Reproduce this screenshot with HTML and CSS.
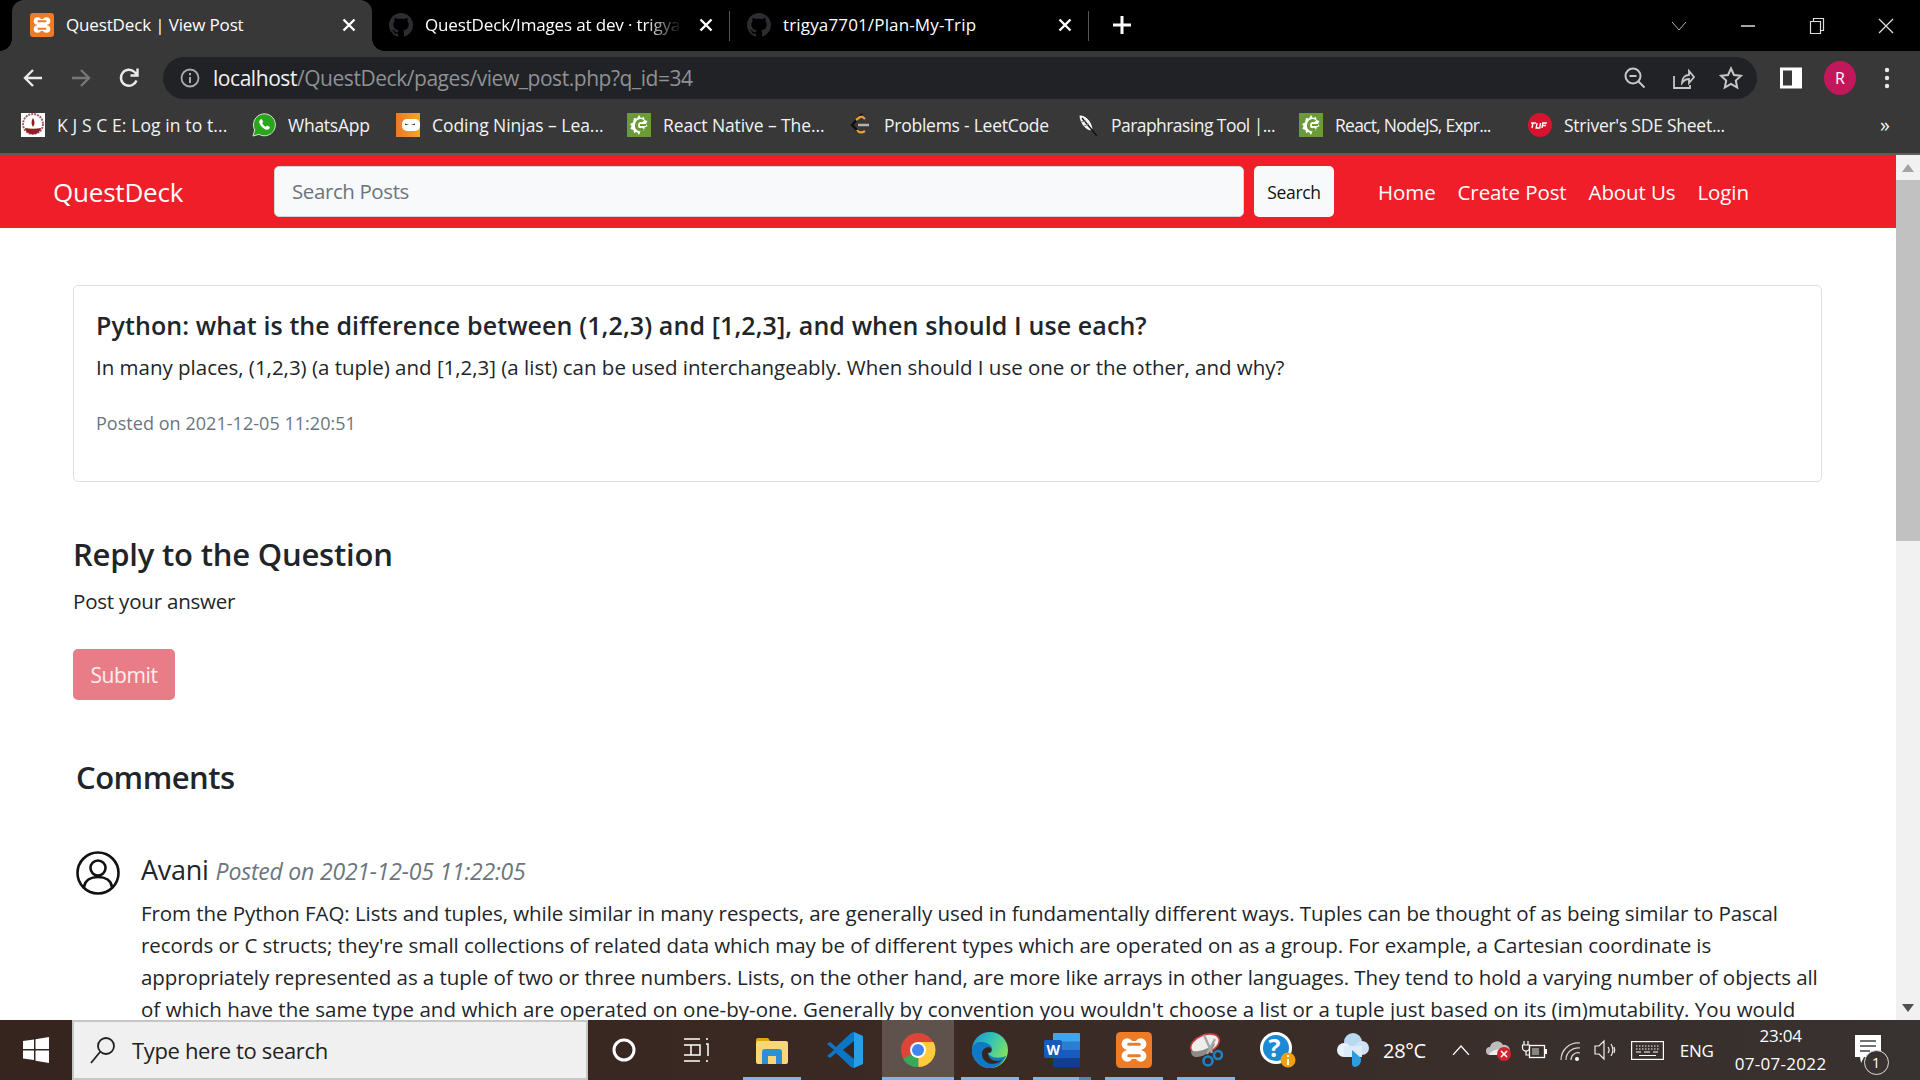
FILE: index.html
```html
<!DOCTYPE html>
<html lang="en">

<head>
    <meta charset="UTF-8">
    <meta name="viewport" content="width=device-width, initial-scale=1.0">
    <title>QuestDeck | View Post</title>
    <link rel="stylesheet" href="styles.css">
</head>

<body>
    <svg class="defs" width="0" height="0">
        <symbol id="github" viewBox="0 0 16 16">
            <path d="M8 0C3.58 0 0 3.58 0 8c0 3.54 2.29 6.53 5.47 7.59.4.07.55-.17.55-.38 0-.19-.01-.82-.01-1.49-2.01.37-2.53-.49-2.69-.94-.09-.23-.48-.94-.82-1.13-.28-.15-.68-.52-.01-.53.63-.01 1.08.58 1.23.82.72 1.21 1.87.87 2.33.66.07-.52.28-.87.51-1.07-1.78-.2-3.64-.89-3.64-3.95 0-.87.31-1.59.82-2.15-.08-.2-.36-1.02.08-2.12 0 0 .67-.21 2.2.82.64-.18 1.32-.27 2-.27.68 0 1.36.09 2 .27 1.53-1.04 2.2-.82 2.2-.82.44 1.1.16 1.92.08 2.12.51.56.82 1.27.82 2.15 0 3.07-1.87 3.75-3.65 3.95.29.25.54.73.54 1.48 0 1.07-.01 1.93-.01 2.2 0 .21.15.46.55.38A8.013 8.013 0 0016 8c0-4.42-3.58-8-8-8z" fill="#2b2d30" />
        </symbol>
        <symbol id="xampp" viewBox="0 0 24 24">
            <rect width="24" height="24" rx="3" fill="#ee7b26" />
            <g fill="#fff">
                <circle cx="7.500" cy="8" r="3.800" />
                <circle cx="16.500" cy="8" r="3.800" />
                <circle cx="7.500" cy="16" r="3.800" />
                <circle cx="16.500" cy="16" r="3.800" />
                <rect x="7" y="6" width="10" height="12" />
            </g>
            <rect x="7.500" y="7.200" width="9" height="2" rx="1" fill="#ee7b26" />
            <rect x="7.500" y="14.800" width="9" height="2" rx="1" fill="#ee7b26" />
        </symbol>
        <symbol id="react" viewBox="0 0 24 24">
            <rect width="24" height="24" fill="#6b9b37" />
            <path d="M12 2l2 3 3-1 .5 3 3 1-1.500 3 1.500 2-3 1.500-.5 3-3-.5L12 22l-2-3-3 1-.5-3-3-1 1-3-1.500-2 3-1.500L7 5l3 .5z" fill="#fff" />
            <path d="M16 8.500c-1-1.500-6-2-6.500 3.500s5 5.500 6.500 3.500" fill="none" stroke="#6b9b37" stroke-width="3" />
            <rect x="13" y="11" width="6" height="2" fill="#6b9b37" />
        </symbol>
        <symbol id="tab-x" viewBox="0 0 14 14">
            <path d="M1.500 1.500l11 11M12.500 1.500l-11 11" stroke="#fff" stroke-width="2.400" />
        </symbol>
    </svg>

    <div class="window">
        <div class="tabstrip">
            <div class="tab active">
                <svg class="favicon" width="24" height="24"><use href="#xampp" /></svg>
                <span class="tab-title">QuestDeck | View Post</span>
                <svg class="tab-close" width="14" height="14"><use href="#tab-x" /></svg>
            </div>
            <div class="tab">
                <svg class="favicon" width="24" height="24"><use href="#github" /></svg>
                <span class="tab-title fade">QuestDeck/Images at dev · trigya</span>
                <svg class="tab-close" width="14" height="14"><use href="#tab-x" /></svg>
            </div>
            <div class="tab-sep"></div>
            <div class="tab">
                <svg class="favicon" width="24" height="24"><use href="#github" /></svg>
                <span class="tab-title wide">trigya7701/Plan-My-Trip</span>
                <svg class="tab-close" width="14" height="14"><use href="#tab-x" /></svg>
            </div>
            <div class="tab-sep"></div>
            <div class="new-tab">
                <svg width="18" height="18" viewBox="0 0 18 18"><path d="M9 0v18M0 9h18" stroke="#fff" stroke-width="3" /></svg>
            </div>
            <div class="win-controls">
                <svg class="win-btn" width="16" height="10" viewBox="0 0 16 10"><path d="M1 1l7 8 7-8" fill="none" stroke="#b4b4b4" /></svg>
                <svg class="win-btn" width="16" height="16" viewBox="0 0 16 16"><path d="M1 8h14" stroke="#ddd" stroke-width="1.500" /></svg>
                <svg class="win-btn" width="16" height="18" viewBox="0 0 16 18"><path d="M1.500 4.500h10v12h-10zM4.500 4.500v-3h10v12h-3" fill="none" stroke="#ddd" stroke-width="1.200" /></svg>
                <svg class="win-btn" width="16" height="16" viewBox="0 0 16 16"><path d="M1 1l14 14M15 1L1 15" stroke="#ddd" stroke-width="1.300" /></svg>
            </div>
        </div>

        <div class="toolbar">
            <svg class="tool" width="22" height="22" viewBox="0 0 22 22"><path d="M20 11H3M11 3l-8 8 8 8" fill="none" stroke="#e8eaed" stroke-width="2.400" /></svg>
            <svg class="tool" width="22" height="22" viewBox="0 0 22 22"><path d="M2 11h17M11 3l8 8-8 8" fill="none" stroke="#75777a" stroke-width="2.400" /></svg>
            <svg class="tool" width="24" height="24" viewBox="0 0 24 24"><path d="M19.500 14.500A8 8 0 1 1 17.500 6L20 8.500M20.500 2.500v7h-7" fill="none" stroke="#e8eaed" stroke-width="2.400" /></svg>
            <div class="omnibox">
                <svg class="info" width="20" height="20" viewBox="0 0 20 20"><circle cx="10" cy="10" r="8.500" fill="none" stroke="#a8abaf" stroke-width="1.800" /><path d="M10 9v6M10 5v2.200" stroke="#a8abaf" stroke-width="2" /></svg>
                <span class="url"><span class="host">localhost</span>/QuestDeck/pages/view_post.php?q_id=34</span>
                <svg class="omni-icon" width="24" height="24" viewBox="0 0 24 24"><circle cx="10" cy="10" r="7.500" fill="none" stroke="#c4c7c5" stroke-width="2" /><path d="M15.500 15.500l6 6M6.500 10h7" stroke="#c4c7c5" stroke-width="2" /></svg>
                <svg class="omni-icon" width="24" height="24" viewBox="0 0 24 24"><path d="M3 10v12h16v-3M11 17c0-5 3-8 7-8V5l5 6-5 6v-4c-3 0-5 1-7 4z" fill="none" stroke="#c4c7c5" stroke-width="1.800" /></svg>
                <svg class="omni-icon" width="24" height="24" viewBox="0 0 24 24"><path d="M12 2.500l3 6.500 7 .8-5.200 4.700 1.400 7L12 17.900l-6.200 3.600 1.400-7L2 9.800 9 9z" fill="none" stroke="#c4c7c5" stroke-width="2" /></svg>
            </div>
            <svg class="panel" width="22" height="22" viewBox="0 0 22 22"><rect x="1.500" y="2" width="19" height="18" fill="none" stroke="#fff" stroke-width="3" /><rect x="12" y="2" width="8" height="18" fill="#fff" /></svg>
            <div class="avatar">R</div>
            <svg class="kebab" width="6" height="22" viewBox="0 0 6 22"><circle cx="3" cy="3" r="2.200" fill="#e8eaed" /><circle cx="3" cy="11" r="2.200" fill="#e8eaed" /><circle cx="3" cy="19" r="2.200" fill="#e8eaed" /></svg>
        </div>

        <div class="bookmarks">
            <div class="bookmark bm-kjsce">
                <svg width="24" height="24" viewBox="0 0 24 24"><rect width="24" height="24" fill="#fff" /><circle cx="12" cy="11" r="10" fill="none" stroke="#a9585c" stroke-width="2" stroke-dasharray="2 1" /><path d="M4 15c5 1 11 1 16 0-1 4-4 6-8 6s-7-2-8-6zM12 5c2 3 2 6 0 9-2-3-2-6 0-9z" fill="#8f1d24" /></svg>
                <span>K J S C E: Log in to t...</span>
            </div>
            <div class="bookmark bm-whatsapp">
                <svg width="24" height="24" viewBox="0 0 24 24"><path d="M1 23l1.700-6A11 11 0 1 1 7 21.400z" fill="#29a71a" stroke="#ddd" stroke-width="1" /><path d="M8.500 6.500c-2 1.500-1.500 4 1 7s5.500 4 7.500 2.500c1-1 1-2 .5-2.300l-2.500-1.200-1 1.300c-1.500-.5-3-2-3.800-3.800l1-1.200L10 6.500c-.4-.5-1-.4-1.500 0z" fill="#fff" /></svg>
                <span>WhatsApp</span>
            </div>
            <div class="bookmark bm-ninjas">
                <svg width="24" height="24" viewBox="0 0 24 24"><defs><linearGradient id="cn" x1="0" x2="1"><stop offset="0" stop-color="#e9792a" /><stop offset="1" stop-color="#f5a623" /></linearGradient></defs><rect width="24" height="24" fill="url(#cn)" /><rect x="6" y="6" width="18" height="12" rx="5" fill="#fff" /><path d="M9 10.500l4 1.500H9zM19 10.500l-4 1.500h4z" fill="#333" /></svg>
                <span>Coding Ninjas – Lea...</span>
            </div>
            <div class="bookmark bm-react">
                <svg width="24" height="24"><use href="#react" /></svg>
                <span>React Native – The...</span>
            </div>
            <div class="bookmark bm-leet">
                <svg width="24" height="24" viewBox="0 0 24 24"><path d="M13 1L3 12l6 6" fill="none" stroke="#0c0c0c" stroke-width="2.200" /><path d="M7 7l4-3c1-.7 3-.2 5 2M8 17c2 3 5 3 8 1" fill="none" stroke="#f0a02c" stroke-width="2.200" /><path d="M9 12h11" stroke="#b3b3b3" stroke-width="2.500" /></svg>
                <span>Problems - LeetCode</span>
            </div>
            <div class="bookmark bm-para">
                <svg width="24" height="24" viewBox="0 0 24 24"><path d="M4 2c6-1 13 6 14 14l-3 2C9 16 4 9 4 2z" fill="#f2f2f2" stroke="#222" stroke-width=".8" /><path d="M7 5l15 18" stroke="#111" stroke-width="1.300" /><path d="M6 9l5-1M9 13l5-2" stroke="#777" /></svg>
                <span>Paraphrasing Tool |...</span>
            </div>
            <div class="bookmark bm-react2">
                <svg width="24" height="24"><use href="#react" /></svg>
                <span>React, NodeJS, Expr...</span>
            </div>
            <div class="bookmark bm-tuf">
                <svg width="24" height="24" viewBox="0 0 24 24"><circle cx="12" cy="12" r="12" fill="#d9132e" /><path d="M3 10h5M5 10l-1 5M9 10l-.8 5h3.500l.8-5M14 15l.8-5h4M14.500 12.500h3.500" fill="none" stroke="#fff" stroke-width="1.400" /></svg>
                <span>Striver's SDE Sheet...</span>
            </div>
            <span class="more">»</span>
        </div>

        <div class="viewport">
            <div class="page">
                <nav class="navbar">
                    <a class="brand">QuestDeck</a>
                    <div class="search-box">Search Posts</div>
                    <button class="search-btn">Search</button>
                    <ul class="nav-links">
                        <li>Home</li>
                        <li>Create Post</li>
                        <li>About Us</li>
                        <li>Login</li>
                    </ul>
                </nav>

                <main class="content">
                    <section class="card">
                        <h5 class="card-title">Python: what is the difference between (1,2,3) and [1,2,3], and when should I use each?</h5>
                        <p class="card-text">In many places, (1,2,3) (a tuple) and [1,2,3] (a list) can be used interchangeably. When should I use one or the other, and why?</p>
                        <p class="card-date">Posted on 2021-12-05 11:20:51</p>
                    </section>

                    <h3 class="reply-title">Reply to the Question</h3>
                    <p class="reply-label">Post your answer</p>
                    <button class="submit" disabled>Submit</button>

                    <h3 class="comments-title">Comments</h3>
                    <div class="comment">
                        <svg class="user-icon" width="44" height="44" viewBox="0 0 44 44"><circle cx="22" cy="22" r="20.500" fill="none" stroke="#111" stroke-width="2.600" /><circle cx="22" cy="17" r="7.500" fill="none" stroke="#111" stroke-width="2.600" /><path d="M8 36c1-7 7-10 14-10s13 3 14 10" fill="none" stroke="#111" stroke-width="2.600" /></svg>
                        <div class="comment-body">
                            <div class="comment-head"><span class="comment-author">Avani</span> <em class="comment-date">Posted on 2021-12-05 11:22:05</em></div>
                            <p class="comment-text">From the Python FAQ: Lists and tuples, while similar in many respects, are generally used in fundamentally different ways. Tuples can be thought of as being similar to Pascal<br>records or C structs; they're small collections of related data which may be of different types which are operated on as a group. For example, a Cartesian coordinate is<br>appropriately represented as a tuple of two or three numbers. Lists, on the other hand, are more like arrays in other languages. They tend to hold a varying number of objects all<br><span class="comment-last">of which have the same type and which are operated on one-by-one. Generally by convention you wouldn't choose a list or a tuple just based on its (im)mutability. You would</span></p>
                        </div>
                    </div>
                </main>
            </div>
            <div class="scrollbar">
                <div class="scroll-arrow"><svg width="12" height="8" viewBox="0 0 12 8"><path d="M6 0l6 8H0z" fill="#a3a3a3" /></svg></div>
                <div class="scroll-thumb"></div>
                <div class="scroll-track"></div>
                <div class="scroll-arrow"><svg width="12" height="8" viewBox="0 0 12 8"><path d="M6 8L0 0h12z" fill="#505050" /></svg></div>
            </div>
        </div>

        <footer class="taskbar">
            <div class="start">
                <svg width="26" height="26" viewBox="0 0 26 26"><path d="M0 4l11-1.500V12H0zM12.500 2.300L26 0v12H12.500zM0 13.500h11V23L0 21.500zM12.500 13.500H26V26l-13.500-2.200z" fill="#fff" /></svg>
            </div>
            <div class="task-search">
                <svg width="28" height="28" viewBox="0 0 28 28"><circle cx="17" cy="10" r="8" fill="none" stroke="#222" stroke-width="1.800" /><path d="M11 16L2 27" stroke="#222" stroke-width="1.800" /></svg>
                <span>Type here to search</span>
            </div>
            <div class="task-slot">
                <svg width="24" height="24" viewBox="0 0 24 24"><circle cx="12" cy="12" r="10" fill="none" stroke="#fff" stroke-width="3" /></svg>
            </div>
            <div class="task-slot">
                <svg width="26" height="26" viewBox="0 0 26 26"><path d="M1 2h16M1 24h16M1 8h16v10H1M8 8v10M23 2h2M23 7h2v12M23 24h2" fill="none" stroke="#fff" stroke-width="1.500" /></svg>
            </div>
            <div class="task-slot open slot-explorer">
                <svg width="32" height="27" viewBox="0 0 32 27"><path d="M0 3a2 2 0 0 1 2-2h10l3 4H0z" fill="#e3a60f" /><rect y="4" width="32" height="23" rx="2" fill="#f9d776" /><path d="M6 27V15a3 3 0 0 1 3-3h14a3 3 0 0 1 3 3v12h-6v-8h-8v8z" fill="#2f8fd6" /></svg>
            </div>
            <div class="task-slot slot-code">
                <svg width="38" height="38" viewBox="0 0 38 38"><path d="M27 1L11 19l16 18 9-4V5z" fill="#23a0e8" /><path d="M27 1v36l-3-1L9 22 3 27 0 25l7-6-7-6 3-2 6 5L24 2z" fill="#0b76c4" /><path d="M27 10L16 19l11 9z" fill="#37261f" /></svg>
            </div>
            <div class="task-slot active open">
                <svg width="36" height="36" viewBox="0 0 36 36"><circle cx="18" cy="18" r="17" fill="#dd4537" /><path d="M18 18L3 27a17 17 0 0 0 16 8z" fill="#3aa756" /><path d="M18 10h15.500a17 17 0 0 1-15 25z" fill="#fdcb3b" /><circle cx="18" cy="18" r="8" fill="#fff" /><circle cx="18" cy="18" r="6" fill="#3f86f0" /></svg>
            </div>
            <div class="task-slot open">
                <svg width="36" height="36" viewBox="0 0 36 36"><defs><linearGradient id="edge" x1="0" y1="0" x2="1" y2=".6"><stop offset="0" stop-color="#1a8fd8" /><stop offset=".5" stop-color="#33c4b4" /><stop offset="1" stop-color="#86e25a" /></linearGradient></defs><circle cx="18" cy="18" r="18" fill="url(#edge)" /><path d="M0 18C0 9 12 8 18 13c4 4 2 9-2 8 2 5 11 6 18 3-3 7-9 12-16 12C8 36 0 28 0 18z" fill="#1078c4" /><path d="M10 22c0-4 3-7 7-7 4 1 3 6-1 6 0 6 7 10 14 7-7 7-20 4-20-6z" fill="#37261f" /></svg>
            </div>
            <div class="task-slot open stacked">
                <svg width="36" height="34" viewBox="0 0 36 34"><rect x="9" width="27" height="9" rx="1" fill="#41a5ee" /><rect x="9" y="8.500" width="27" height="8.500" fill="#2b7cd3" /><rect x="9" y="17" width="27" height="8.500" fill="#185abd" /><rect x="9" y="25.500" width="27" height="8.500" rx="1" fill="#103f91" /><rect y="7" width="18" height="18" rx="2" fill="#185abd" /><text x="2.500" y="21.500" class="word-w">W</text></svg>
            </div>
            <div class="task-slot open">
                <svg width="36" height="36"><use href="#xampp" /></svg>
            </div>
            <div class="task-slot open">
                <svg width="34" height="36" viewBox="0 0 34 36"><ellipse cx="16" cy="12" rx="15" ry="9" transform="rotate(-22 16 12)" fill="#efeeed" stroke="#d0383f" stroke-width="1.600" /><path d="M2 19c8 1 16-1 24-8-1 7-9 13-18 14-4 0-6-2-6-6z" fill="#8e8a88" /><path d="M15 3l8 18M26 7L18 22" stroke="#a8a8a8" stroke-width="2.400" /><circle cx="19" cy="29" r="4.500" fill="none" stroke="#1f83c8" stroke-width="2.600" /><circle cx="29" cy="23" r="4" fill="none" stroke="#1f83c8" stroke-width="2.600" /></svg>
            </div>
            <div class="task-slot">
                <svg class="help-icon" width="36" height="36" viewBox="0 0 36 36"><circle cx="16" cy="16" r="14.500" fill="#1a8ad4" stroke="#fff" stroke-width="3" /><text x="8.500" y="25" class="help-mark">?</text><circle cx="28" cy="28" r="7.500" fill="#f0a10f" /><path d="M28 27v6M28 23v2" stroke="#fff" stroke-width="2" /></svg>
            </div>
            <div class="weather">
                <svg width="32" height="36" viewBox="0 0 32 36"><circle cx="16" cy="10" r="9" fill="#b9d8f2" /><circle cx="7" cy="18" r="7" fill="#e8f2fb" /><circle cx="25" cy="16" r="7" fill="#cfe2f4" /><rect x="7" y="14" width="18" height="11" fill="#dcebf8" /><path d="M15 18l9 8c1 5-3 9-6 9s-3-3-3-5z" fill="#2d9de0" /></svg>
                <span>28°C</span>
            </div>
            <div class="tray">
                <svg class="t-chevron" width="18" height="10" viewBox="0 0 18 10"><path d="M1 10l8-9 8 9" fill="none" stroke="#fff" stroke-width="1.200" /></svg>
                <svg class="t-cloud" width="26" height="24" viewBox="0 0 26 24"><path d="M4 17a4 4 0 0 1 0-8 7 7 0 0 1 13-2 5 5 0 0 1 3 10z" fill="#bdbdbd" /><path d="M3 16c3-3 9-6 15-5l-1 6H4z" fill="#eee" /><circle cx="18" cy="16" r="7" fill="#d3232c" /><path d="M15 13l6 6M21 13l-6 6" stroke="#fff" stroke-width="1.600" /></svg>
                <svg class="t-power" width="26" height="18" viewBox="0 0 26 18"><path d="M3 0v4M7 0v4M1.500 4h7v3c0 2-2 3-3.500 3S1.500 9 1.500 7zM5 10v4h3" fill="none" stroke="#fff" stroke-width="1.200" /><rect x="8.500" y="4.500" width="15" height="12" fill="none" stroke="#fff" stroke-width="1.300" /><rect x="24" y="8" width="2" height="5" fill="#fff" /><rect x="11" y="7" width="7" height="7" fill="#8a8583" /></svg>
                <svg class="t-wifi" width="22" height="22" viewBox="0 0 22 22"><path d="M1 21A17 17 0 0 1 20 4M6 21A12 12 0 0 1 20 9M11 21a7 7 0 0 1 9-7" fill="none" stroke="#d8d8d8" stroke-width="1.200" /><circle cx="17" cy="20" r="2" fill="#fff" /></svg>
                <svg class="t-volume" width="24" height="22" viewBox="0 0 24 22"><path d="M1 7h4l5-5v18l-5-5H1zM14 8c1.500 2 1.500 4 0 6M17 5c2.500 4 2.500 8 0 12M20 8c1 2 1 4 0 6" fill="none" stroke="#eee" stroke-width="1.200" /></svg>
                <svg class="t-keys" width="33" height="19" viewBox="0 0 33 19"><rect x=".6" y=".6" width="31.800" height="17.800" fill="none" stroke="#fff" stroke-width="1.200" /><path d="M5 5h23M5 8h23" stroke="#fff" stroke-width="1" stroke-dasharray="1.500 1.500" /><path d="M5 11h5M13 11h6M22 11h5M8 14.500h17" stroke="#fff" stroke-width="1" /></svg>
                <span class="t-lang">ENG</span>
                <div class="t-clock"><span>23:04</span><span class="t-date">07-07-2022</span></div>
                <div class="t-notify">
                    <svg width="26" height="30" viewBox="0 0 26 30"><path d="M0 0h26v22H9l-3 6-1-6H0z" fill="#fff" /><path d="M5 6h16M5 11h16M5 16h10" stroke="#444" stroke-width="1.500" /></svg>
                    <span class="t-badge">1</span>
                </div>
            </div>
        </footer>
    </div>
</body>

</html>
```

FILE: styles.css
```css
* {
    box-sizing: border-box;
}

html,
body {
    margin: 0;
    height: 100%;
    overflow: hidden;
    background-color: #fff;
    font-family: "Open Sans", "Noto Sans", sans-serif;
}

.defs {
    display: block;
    height: 0;
}

.window {
    display: flex;
    flex-direction: column;
    height: 1080px;
    width: 1920px;
}

/* browser chrome */
.tabstrip {
    display: flex;
    align-items: center;
    height: 51px;
    padding-left: 12px;
    background-color: #000;
    color: #fff;
    font-size: 17px;
    letter-spacing: -0.15px;
}

.tab {
    display: flex;
    align-items: center;
    width: 358px;
    height: 51px;
    padding: 0 16px 2px 17px;
    gap: 12px;
    flex-shrink: 0;
}

.tab.active {
    position: relative;
    width: 360px;
    background-color: #383838;
    border-radius: 12px 12px 0 0;
    padding-left: 18px;
}

.tab.active::before,
.tab.active::after {
    content: "";
    position: absolute;
    bottom: 0;
    width: 12px;
    height: 12px;
}

.tab.active::before {
    left: -12px;
    background: radial-gradient(circle at 0 0, #000 11.500px, #383838 12px);
}

.tab.active::after {
    right: -12px;
    background: radial-gradient(circle at 100% 0, #000 11.500px, #383838 12px);
}

.tab-sep {
    flex-shrink: 0;
    width: 1px;
    height: 30px;
    background-color: #555;
}

.tab + .tab {
    width: 357px;
}

.tab-title {
    flex: 1;
    white-space: nowrap;
}

.tab-title.wide {
    letter-spacing: 0.15px;
}

.tab-title.fade {
    -webkit-mask-image: linear-gradient(to right, #000 84%, transparent 98%);
    mask-image: linear-gradient(to right, #000 84%, transparent 98%);
}

.new-tab {
    display: flex;
    align-items: center;
    justify-content: center;
    width: 66px;
    height: 51px;
    padding-bottom: 2px;
}

.win-controls {
    display: flex;
    align-items: center;
    margin-left: 516px;
    gap: 53px;
}

.toolbar {
    display: flex;
    align-items: center;
    height: 49px;
    padding: 5px 0 0 22px;
    background-color: #383838;
}

.tool {
    margin-right: 26px;
    flex-shrink: 0;
}

.tool:nth-child(2) {
    margin-right: 25px;
}

.tool:nth-child(3) {
    margin-right: 22px;
}

.omnibox {
    display: flex;
    align-items: center;
    flex-shrink: 0;
    width: 1594px;
    height: 42px;
    padding: 0 14px 0 17px;
    border-radius: 21px;
    background-color: #212225;
    font-size: 21px;
    letter-spacing: -0.45px;
    color: #8e9195;
}

.url {
    flex: 1;
    margin-left: 13px;
}

.host {
    color: #f1f3f4;
}

.omni-icon {
    margin-left: 24px;
}

.panel {
    margin-left: 23px;
}

.avatar {
    width: 32px;
    height: 34px;
    margin-left: 22px;
    border-radius: 50%;
    background-color: #c2185b;
    color: #fff;
    font-size: 16px;
    line-height: 34px;
    text-align: center;
}

.kebab {
    margin-left: 28px;
}

.bookmarks {
    display: flex;
    align-items: center;
    height: 55px;
    padding-left: 21px;
    padding-bottom: 4px;
    background-color: #383838;
    border-bottom: 2px solid #5d5d5d;
    color: #f1f3f4;
    font-size: 17.500px;
    letter-spacing: -0.25px;
    white-space: nowrap;
}

.bookmark {
    display: flex;
    align-items: center;
    gap: 12px;
    flex-shrink: 0;
}

.bm-kjsce { width: 231px; letter-spacing: 0.1px; }
.bm-whatsapp { width: 144px; }
.bm-ninjas { width: 231px; letter-spacing: -0.05px; }
.bm-react { width: 222px; letter-spacing: -0.1px; }
.bm-leet { width: 226px; }
.bm-para { width: 224px; letter-spacing: -0.55px; }
.bm-react2 { width: 229px; letter-spacing: -0.75px; }
.bm-tuf { width: 352px; }

.bm-leet svg {
    margin-right: -1px;
}

.more {
    font-size: 20px;
}

/* the page itself */
.viewport {
    display: flex;
    flex: 1;
    min-height: 0;
}

.page {
    flex: 1;
    overflow: hidden;
    color: #212529;
}

.navbar {
    display: flex;
    align-items: center;
    height: 73px;
    padding-left: 53px;
    background-color: #f01e28;
}

.brand {
    width: 221px;
    color: #fff;
    font-size: 26px;
    letter-spacing: -0.2px;
}

.search-box {
    width: 970px;
    height: 51px;
    padding: 0 17px;
    background-color: #f8f9fa;
    border: 1px solid #ced4da;
    border-radius: 5px;
    color: #6c757d;
    font-size: 20.500px;
    letter-spacing: -0.4px;
    line-height: 49px;
}

.search-btn {
    width: 80px;
    height: 51px;
    margin-left: 10px;
    padding: 0;
    background-color: #f8f9fa;
    border: none;
    border-radius: 5px;
    color: #111;
    font-family: inherit;
    font-size: 17.500px;
    letter-spacing: -0.3px;
}

.nav-links {
    display: flex;
    margin: 0 0 0 44px;
    padding: 0;
    list-style: none;
    gap: 22px;
    color: #fff;
    font-size: 20.500px;
    letter-spacing: -0.1px;
}

.content {
    padding: 57px 74px 0 73px;
}

.card {
    height: 197px;
    padding: 22px 22px;
    border: 1px solid #dfdfdf;
    border-radius: 5px;
}

.card-title {
    margin: 0;
    font-size: 25px;
    font-weight: 600;
    letter-spacing: 0.1px;
    line-height: 34px;
}

.card-text {
    margin: 9px 0 0;
    font-size: 20.500px;
    letter-spacing: -0.01px;
    line-height: 32px;
}

.card-date {
    margin: 24px 0 0;
    color: #6c757d;
    font-size: 18px;
    letter-spacing: 0.04px;
    line-height: 32px;
}

.reply-title {
    margin: 49px 0 0;
    font-size: 31px;
    font-weight: 600;
    letter-spacing: -0.2px;
    line-height: 46px;
}

.reply-label {
    margin: 8px 0 0;
    font-size: 20.500px;
    letter-spacing: -0.2px;
    line-height: 32px;
}

.submit {
    display: block;
    width: 102px;
    height: 51px;
    margin-top: 32px;
    padding: 0;
    background-color: #e97d87;
    border: none;
    border-radius: 5px;
    color: #fdeeee;
    font-family: inherit;
    font-size: 21px;
    letter-spacing: -0.4px;
}

.comments-title {
    margin: 54px 0 0 3px;
    font-size: 31px;
    font-weight: 600;
    letter-spacing: -0.5px;
    line-height: 46px;
}

.comment {
    display: flex;
    margin: 51px 0 0 3px;
}

.user-icon {
    flex-shrink: 0;
}

.comment-body {
    margin-left: 21px;
}

.comment-head {
    white-space: nowrap;
}

.comment-author {
    font-size: 27px;
    letter-spacing: -0.3px;
}

.comment-date {
    margin-left: 3px;
    color: #6c757d;
    font-size: 23px;
    font-weight: 500;
    letter-spacing: -0.2px;
}

.comment-text {
    margin: 9px 0 0;
    font-size: 20.500px;
    letter-spacing: -0.06px;
    line-height: 32px;
    white-space: nowrap;
}

.comment-last {
    letter-spacing: 0.03px;
}

.scrollbar {
    display: flex;
    flex-direction: column;
    width: 24px;
    background-color: #f1f1f1;
}

.scroll-arrow {
    display: flex;
    align-items: center;
    justify-content: center;
    height: 25px;
}

.scroll-thumb {
    height: 361px;
    background-color: #c1c1c1;
}

.scroll-track {
    flex: 1;
}

/* windows taskbar */
.taskbar {
    display: flex;
    align-items: center;
    flex-shrink: 0;
    height: 60px;
    background: linear-gradient(to right, #36241e, #3b2a24 50%, #383230);
    color: #fff;
}

.start {
    display: flex;
    align-items: center;
    justify-content: center;
    width: 72px;
    height: 60px;
}

.task-search {
    display: flex;
    align-items: center;
    width: 516px;
    height: 60px;
    padding-left: 15px;
    gap: 15px;
    background-color: #f0f0f0;
    border: 2px solid #c6c6c6;
    color: #222;
    font-size: 22px;
    letter-spacing: -0.35px;
}

.task-slot {
    display: flex;
    align-items: center;
    justify-content: center;
    width: 72px;
    height: 60px;
}

.task-slot.open {
    background: linear-gradient(#76b9ed, #76b9ed) center bottom / 58px 3px no-repeat;
}

.task-slot.open.stacked {
    background: linear-gradient(to right, #76b9ed 80%, #4f87ad 80%) center bottom / 58px 3px no-repeat;
}

.task-slot.open.active {
    background: linear-gradient(#76b9ed, #76b9ed) center bottom / 100% 3px no-repeat, #5f524d;
}

.slot-explorer {
    margin-left: 4px;
}

.slot-code {
    margin-left: 2px;
}

.word-w {
    fill: #fff;
    font-family: "Open Sans", sans-serif;
    font-size: 14px;
    font-weight: 700;
}

.help-icon {
    overflow: visible;
}

.help-mark {
    fill: #fff;
    font-family: "Open Sans", sans-serif;
    font-size: 25px;
    font-weight: 700;
}

.weather {
    display: flex;
    align-items: center;
    margin-left: 23px;
    gap: 14px;
    font-size: 20px;
    letter-spacing: -0.3px;
}

.tray {
    display: flex;
    align-items: center;
    margin-left: 26px;
}

.t-chevron {
    margin-right: 16px;
}

.t-power {
    margin-left: 9px;
}

.t-wifi {
    margin-left: 13px;
}

.t-volume {
    margin-left: 12px;
}

.t-keys {
    margin-left: 13px;
}

.t-lang {
    margin-left: 16px;
    font-size: 17px;
    letter-spacing: -0.3px;
}

.t-clock {
    display: flex;
    flex-direction: column;
    align-items: center;
    width: 100px;
    margin-left: 17px;
    font-size: 17px;
    letter-spacing: -0.2px;
    line-height: 28px;
}

.t-date {
    letter-spacing: 0.3px;
}

.t-notify {
    position: relative;
    width: 26px;
    height: 30px;
    margin-left: 24px;
}

.t-badge {
    position: absolute;
    right: -8px;
    bottom: -10px;
    width: 25px;
    height: 25px;
    border: 1px solid #ddd;
    border-radius: 50%;
    background-color: #3a3230;
    font-size: 15px;
    line-height: 23px;
    text-align: center;
}
```
